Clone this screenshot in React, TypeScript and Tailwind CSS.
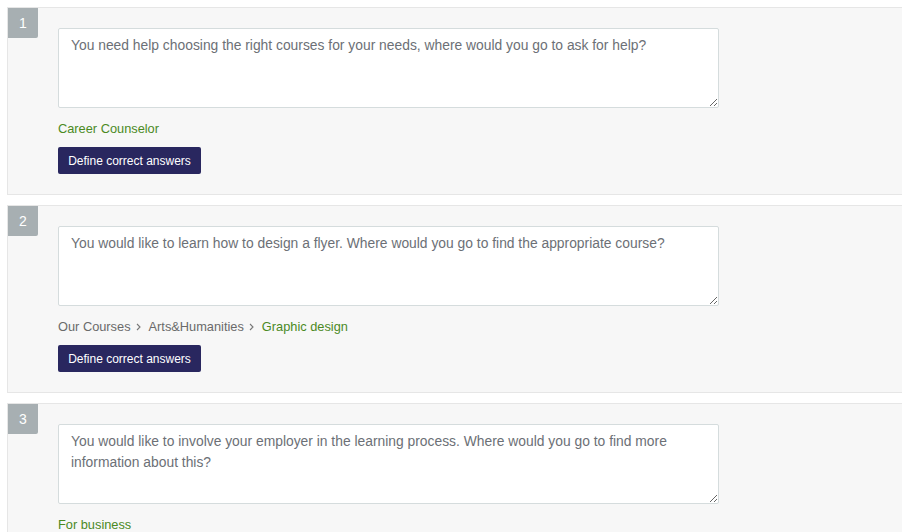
const questions = [
  {
    id: 1,
    text: 'You need help choosing the right courses for your needs, where would you go to ask for help?',
    path: [] as string[],
    answer: 'Career Counselor',
  },
  {
    id: 2,
    text: 'You would like to learn how to design a flyer. Where would you go to find the appropriate course?',
    path: ['Our Courses', 'Arts&Humanities'],
    answer: 'Graphic design',
  },
  {
    id: 3,
    text: 'You would like to involve your employer in the learning process. Where would you go to find more information about this?',
    path: [] as string[],
    answer: 'For business',
  },
]

function Chevron() {
  return (
    <svg width="5" height="8" viewBox="0 0 5 8" className="ml-[5px] mr-[8px] inline-block">
      <path d="M1 1 L4 4 L1 7" fill="none" stroke="#777" strokeWidth="1.1" />
    </svg>
  )
}

export default function App() {
  return (
    <div className="h-[532px] overflow-hidden bg-white pl-[7px] pt-[7px] font-['Liberation_Sans',Arial,sans-serif]">
      <div className="flex flex-col gap-[10px]">
        {questions.map((q) => (
          <div
            key={q.id}
            className="flex h-[188px] shrink-0 border border-r-0 border-[#e6e6e6] bg-[#f7f7f7]"
          >
            <div className="flex h-[30px] w-[30px] shrink-0 items-center justify-center rounded-br-[2px] bg-[#a7afb2] text-[14px] text-white">
              {q.id}
            </div>
            <div className="ml-5 pt-5">
              <textarea
                defaultValue={q.text}
                className="block h-[80px] w-[661px] rounded-[2px] border border-[#d5dcdd] bg-white px-3 py-1.5 text-[13.85px] leading-[21px] text-[#6c7076] outline-none"
              />
              <div className="mt-3 flex h-[18px] items-center text-[12.8px] leading-[18px]">
                {q.path.map((p) => (
                  <span key={p} className="flex items-center text-[#6a6a6a]">
                    {p}
                    <Chevron />
                  </span>
                ))}
                <span className="text-[#4b8a1f]">{q.answer}</span>
              </div>
              <button className="mt-[9px] h-[27px] w-[143px] rounded-[2px] bg-[#29275f] text-[12px] text-white">
                Define correct answers
              </button>
            </div>
          </div>
        ))}
      </div>
    </div>
  )
}
